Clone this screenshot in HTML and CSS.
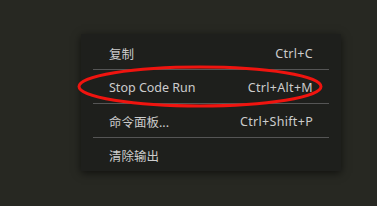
FILE: index.html
```html
<!DOCTYPE html>
<html>
<head>
<meta charset="utf-8">
<link rel="stylesheet" href="styles.css">
</head>
<body>
<div class="menu">
  <div class="item"><span class="label">复制</span><span class="key">Ctrl+C</span></div>
  <div class="sep"></div>
  <div class="item"><span class="label">Stop Code Run</span><span class="key">Ctrl+Alt+M</span></div>
  <div class="sep"></div>
  <div class="item"><span class="label">命令面板...</span><span class="key">Ctrl+Shift+P</span></div>
  <div class="sep"></div>
  <div class="item"><span class="label">清除输出</span><span class="key"></span></div>
  <svg class="mark" width="248" height="44" viewBox="0 0 248 44"><ellipse cx="123" cy="21.5" rx="121" ry="19.5" fill="none" stroke="#f0140f" stroke-width="3"/></svg>
</div>
</body>
</html>
```
FILE: styles.css
```css
html, body {
  margin: 0;
  padding: 0;
  background: #272822;
  width: 377px;
  height: 206px;
  overflow: hidden;
}
body {
  padding: 34px 0 0 81px;
  box-sizing: border-box;
  font-family: "Noto Sans", "Noto Sans CJK SC", sans-serif;
  font-size: 12.5px;
}
.menu {
  position: relative;
  width: 260px;
  background: #1e1f1c;
  padding-top: 2px;
  box-shadow: 0 2px 8px rgba(0,0,0,0.6);
  color: #cccccc;
}
.item {
  height: 33px;
  display: flex;
  align-items: center;
  justify-content: space-between;
  padding: 1px 28px 0 28px;
  box-sizing: border-box;
}
.key {
  letter-spacing: 0.3px;
}
.sep {
  height: 1px;
  margin: 0 12px;
  background: #555555;
}
.mark {
  position: absolute;
  left: -4px;
  top: 31px;
}
```
